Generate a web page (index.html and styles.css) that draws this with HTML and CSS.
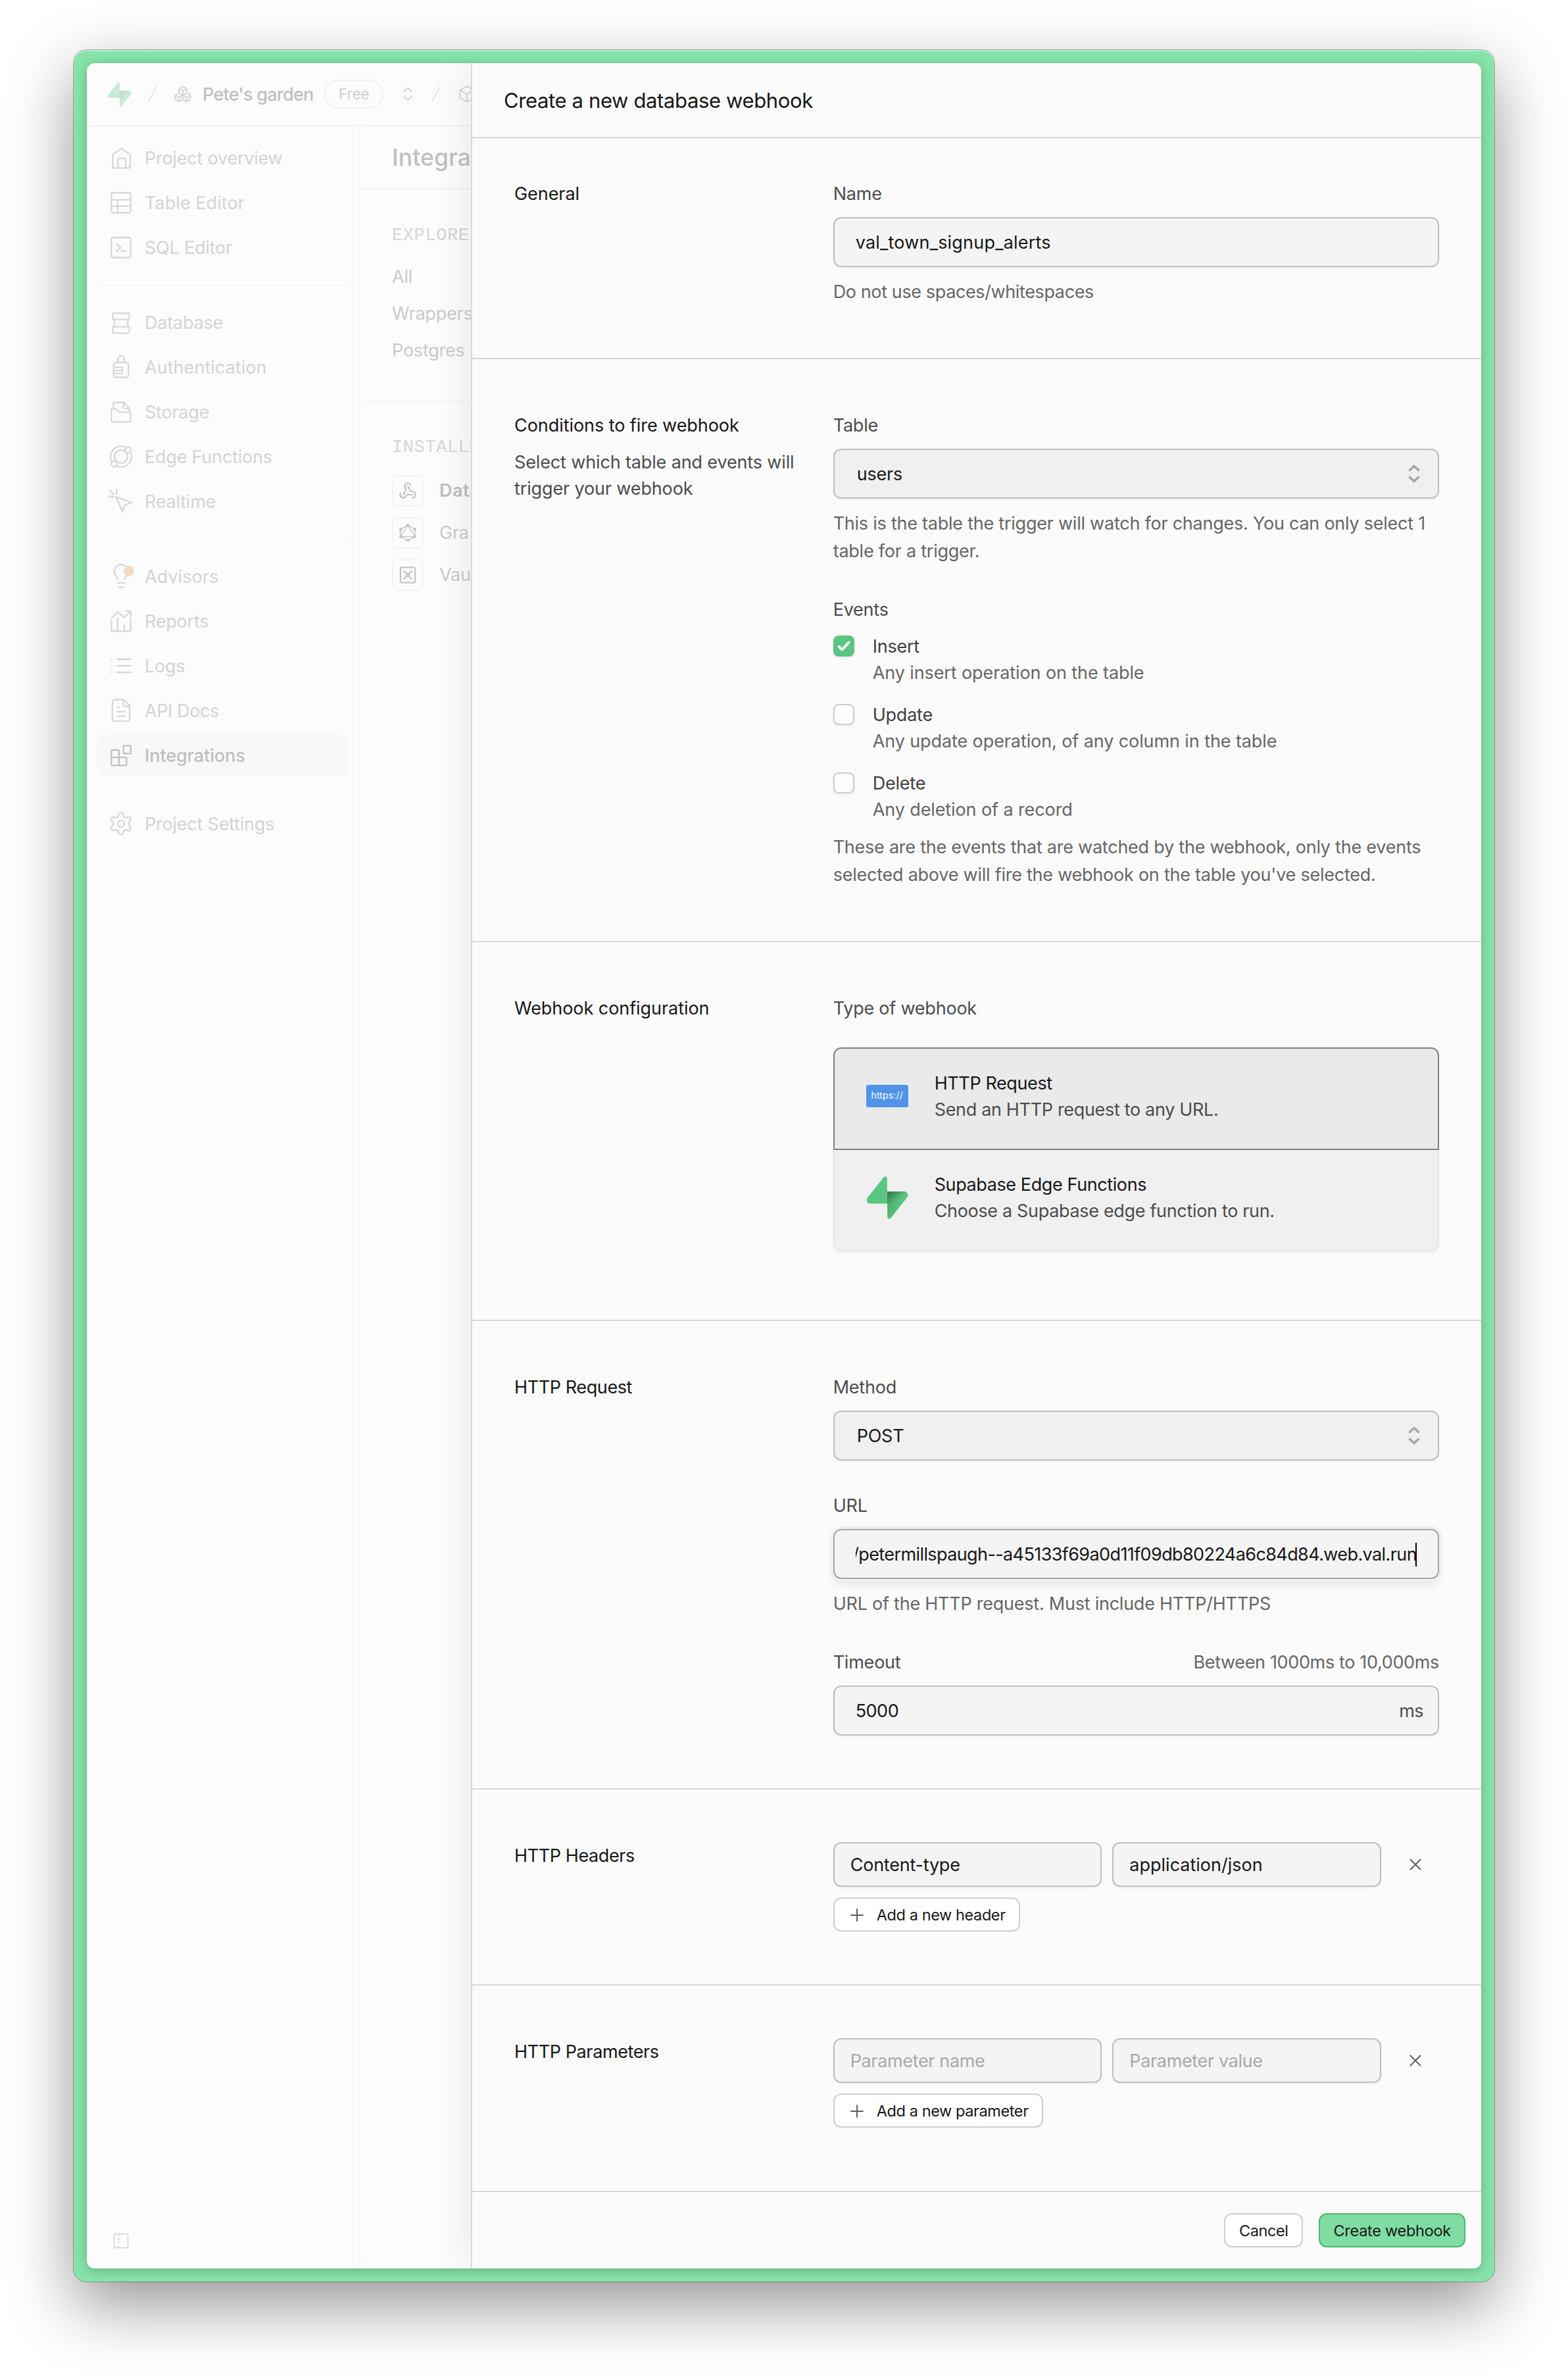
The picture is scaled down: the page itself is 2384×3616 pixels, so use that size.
FILE: index.html
```html
<!DOCTYPE html>
<html lang="en">
<head>
<meta charset="utf-8">
<title>Create a new database webhook</title>
<link rel="stylesheet" href="styles.css">
</head>
<body>
<svg class="defs" width="0" height="0" aria-hidden="true">
  <defs>
    <linearGradient id="bolt-base" x1="54" y1="55" x2="94" y2="72" gradientUnits="userSpaceOnUse"><stop offset="0" stop-color="#4aa86b"/><stop offset="1" stop-color="#5bc680"/></linearGradient>
    <linearGradient id="bolt-shade" x1="40" y1="32" x2="66" y2="72" gradientUnits="userSpaceOnUse"><stop offset="0" stop-color="#000" stop-opacity=".45"/><stop offset="1" stop-color="#000" stop-opacity="0"/></linearGradient>
    <symbol id="bolt" viewBox="0 0 109 113">
      <path fill="url(#bolt-base)" d="M63.7 110.3c-2.9 3.6-8.7 1.6-8.7-3L54 40h45.2c8.2 0 12.8 9.5 7.7 15.9z"/>
      <path fill="url(#bolt-shade)" d="M63.7 110.3c-2.9 3.6-8.7 1.6-8.7-3L54 40h45.2c8.2 0 12.8 9.5 7.7 15.9z"/>
      <path fill="#5bc680" d="M45.3 2.1c2.9-3.6 8.7-1.7 8.7 2.9l.5 67.3H9.8c-8.2 0-12.7-9.5-7.6-15.9z"/>
    </symbol>
    <symbol id="updown" viewBox="0 0 20 28"><path d="M3.5 8.5 10 2.5l6.5 6M3.5 19.5l6.5 6 6.5-6"/></symbol>
    <symbol id="plus" viewBox="0 0 20 20"><path d="M10 1v18M1 10h18"/></symbol>
    <symbol id="cross" viewBox="0 0 20 20"><path d="m2.5 2.5 15 15M17.5 2.5l-15 15"/></symbol>
  </defs>
</svg>

<div class="window">
  <div class="app">
    <header class="topbar">
      <svg class="brand"><use href="#bolt"/></svg>
      <svg class="slash" viewBox="0 0 14 24"><path d="M13 1 1 23"/></svg>
      <svg class="ico-s org-ico" viewBox="0 0 24 24"><path d="M2.97 12.92A2 2 0 0 0 2 14.63v3.24a2 2 0 0 0 .97 1.71l3 1.8a2 2 0 0 0 2.06 0L12 19v-5.5l-5-3-4.03 2.42ZM7 16.5l-4.74-2.85M7 16.5l5-3M7 16.5v5.17M12 13.5V19l3.97 2.38a2 2 0 0 0 2.06 0l3-1.8a2 2 0 0 0 .97-1.71v-3.24a2 2 0 0 0-.97-1.71L17 10.5l-5 3ZM17 16.5l-5-3M17 16.5l4.74-2.85M17 16.5v5.17M7.97 4.42A2 2 0 0 0 7 6.13v4.37l5 3 5-3V6.13a2 2 0 0 0-.97-1.71l-3-1.8a2 2 0 0 0-2.06 0l-3 1.8ZM12 8 7.26 5.15M12 8l4.74-2.85M12 13.5V8"/></svg>
      <span class="org">Pete's garden</span>
      <span class="pill">Free</span>
      <svg class="ico-s org-switch" viewBox="0 0 24 24"><path d="m7 15 5 5 5-5M7 9l5-5 5 5"/></svg>
      <svg class="slash second" viewBox="0 0 14 24"><path d="M13 1 1 23"/></svg>
      <svg class="ico-s project-ico" viewBox="0 0 24 24"><path d="M21 8a2 2 0 0 0-1-1.73l-7-4a2 2 0 0 0-2 0l-7 4A2 2 0 0 0 3 8v8a2 2 0 0 0 1 1.73l7 4a2 2 0 0 0 2 0l7-4A2 2 0 0 0 21 16ZM3.3 7l8.7 5 8.7-5M12 22V12"/></svg>
    </header>
    <div class="body">
      <nav class="sidebar">
        <div class="group">
          <a class="item"><svg viewBox="0 0 24 24"><path d="m12 3.2 7.2 5q.8.6.8 1.5v9.8q0 1.5-1.5 1.5h-13Q4 21 4 19.5V9.7q0-.9.8-1.5zM8.8 21v-7.7q0-1 1-1h5q1 0 1 1V21" transform="translate(.4 .2)"/></svg><span>Project overview</span></a>
          <a class="item"><svg viewBox="0 0 24 24"><rect x="3.2" y="3" width="17.6" height="18.3" rx="1.6"/><path d="M3.2 9.4h17.6M3.2 15.2h17.6M8.9 9.4v11.9"/></svg><span class="wide">Table Editor</span></a>
          <a class="item"><svg viewBox="0 0 24 24"><rect x="3.2" y="3" width="17.6" height="18.3" rx="1.6"/><path d="m7.8 8.5 3.7 3.6-3.7 3.6M12 15.3h4.2"/></svg><span>SQL Editor</span></a>
        </div>
        <hr>
        <div class="group">
          <a class="item"><svg viewBox="0 0 24 24"><rect x="4.4" y="3.6" width="15.2" height="5.8" rx="1.2"/><rect x="4.4" y="16" width="15.2" height="5.8" rx="1.2"/><path d="M5.9 9.4V16M18.2 9.4V16"/></svg><span>Database</span></a>
          <a class="item"><svg viewBox="0 0 24 24"><rect x="5.2" y="7.9" width="13.6" height="13.4" rx="1.8"/><path d="M9.2 7.9V4.6a2.9 2.9 0 0 1 5.8 0v3.3M5.2 12.1h8v5.7h-8M5.2 14.9h8"/></svg><span class="wide">Authentication</span></a>
          <a class="item"><svg viewBox="0 0 24 24"><path d="M5 9.5V4.4q0-1.1 1.1-1.1h8.4l5.1 5.6v3M14.2 3.3v4.3q0 1.3 1.3 1.3h4.1M3.2 10.6q0-1.2 1.2-1.2h3.3l2.3 2.8h9.4q1.4 0 1.4 1.4v6q0 1.6-1.6 1.6H4.8q-1.6 0-1.6-1.6z"/></svg><span>Storage</span></a>
          <a class="item"><svg viewBox="0 0 24 24"><circle cx="12" cy="12" r="5.9"/><circle cx="18.4" cy="5.8" r="2.6"/><circle cx="5.7" cy="18.5" r="2.6"/><path d="M16.2 3.5A9.5 9.5 0 0 0 3.8 16.8M20.6 7.900A9.500 9.500 0 0 1 7.900 20.600"/></svg><span>Edge Functions</span></a>
          <a class="item"><svg viewBox="0 0 24 24"><path d="m7.300 7.700 14.200 5.400-6.100 2.500-2 5.800zM8 1.400v3.800M1.600 1.800l3.700 3.700M1.100 7.800h4.300"/></svg><span>Realtime</span></a>
        </div>
        <hr>
        <div class="group">
          <a class="item advisors"><svg viewBox="0 0 24 24"><path d="M9.100 14.900c-.3-1.500-.9-2.300-1.800-3.500a6.200 6.200 0 1 1 9.600 0c-.9 1.200-1.600 2-1.900 3.500M9.200 17.900h5.600M9.900 22h4.200"/></svg><i class="dot"></i><span class="wide">Advisors</span></a>
          <a class="item"><svg viewBox="0 0 24 24"><path d="m3.400 9 5.400-5.200 6.200 5L20.800 3M16.300 2.900h4.700v4.600M3.200 12v8q0 1.300 1.300 1.300h15q1.300 0 1.300-1.300V9.800M8.800 9.800v11.400M15 14.800v6.400"/></svg><span>Reports</span></a>
          <a class="item"><svg viewBox="0 0 24 24"><path d="M8.600 6h12.200M8.600 12h12.200M8.600 18h12.200M3.400 6h.1M3.400 12h.1M3.400 18h.1"/></svg><span>Logs</span></a>
          <a class="item"><svg viewBox="0 0 24 24"><path d="M14.500 2.100H6.100a2 2 0 0 0-2 2v15.600a2 2 0 0 0 2 2h11.700a2 2 0 0 0 2-2V7.600zM14 2.300v4.300a1.600 1.600 0 0 0 1.600 1.600h4M10.300 9H8.600M15.600 13H8.600M15.600 17H8.600"/></svg><span class="tight">API Docs</span></a>
          <a class="item active"><svg viewBox="0 0 24 24"><rect x="14.200" y="3.200" width="6.700" height="7.200" rx=".9"/><path d="M10.200 21.200V8.200q0-1-1-1H4.200q-1 0-1 1v12q0 1 1 1h11.900q1 0 1-1v-5.300q0-1-1-1H3.200"/></svg><span>Integrations</span></a>
        </div>
        <div class="group settings">
          <a class="item"><svg viewBox="0 0 24 24"><path d="M12.220 2h-.44a2 2 0 0 0-2 2v.18a2 2 0 0 1-1 1.730l-.43.25a2 2 0 0 1-2 0l-.15-.08a2 2 0 0 0-2.730.73l-.22.38a2 2 0 0 0 .73 2.730l.15.1a2 2 0 0 1 1 1.720v.51a2 2 0 0 1-1 1.740l-.15.09a2 2 0 0 0-.73 2.730l.22.38a2 2 0 0 0 2.730.73l.15-.08a2 2 0 0 1 2 0l.43.25a2 2 0 0 1 1 1.730V20a2 2 0 0 0 2 2h.44a2 2 0 0 0 2-2v-.18a2 2 0 0 1 1-1.730l.43-.25a2 2 0 0 1 2 0l.15.08a2 2 0 0 0 2.730-.73l.22-.39a2 2 0 0 0-.73-2.730l-.15-.08a2 2 0 0 1-1-1.740v-.5a2 2 0 0 1 1-1.740l.15-.09a2 2 0 0 0 .73-2.730l-.22-.38a2 2 0 0 0-2.730-.73l-.15.08a2 2 0 0 1-2 0l-.43-.25a2 2 0 0 1-1-1.730V4a2 2 0 0 0-2-2z"/><circle cx="12" cy="12" r="3"/></svg><span>Project Settings</span></a>
        </div>
        <svg class="collapse" viewBox="0 0 24 24"><rect x="3" y="3" width="18" height="18" rx="2"/><path d="M9 3v2M9 9v1.500M9 13.500V15M9 19v2"/></svg>
      </nav>
      <main class="page">
        <h1>Integrations</h1>
        <section class="explore">
          <h2>EXPLORE</h2>
          <ul><li>All</li><li>Wrappers</li><li>Postgres Modules</li></ul>
        </section>
        <section class="installed">
          <h2>INSTALLED</h2>
          <ul>
            <li class="current"><i class="tile"><svg viewBox="0 0 24 24"><path d="M18 16.980h-5.990c-1.100 0-1.950.94-2.480 1.900A4 4 0 0 1 2 17c.01-.7.2-1.400.57-2M6 17l3.130-5.780c.53-.97.1-2.180-.5-3.100a4 4 0 1 1 6.890-4.060M12 6l3.130 5.730C15.660 12.700 16.900 13 18 13a4 4 0 0 1 0 8"/></svg></i>Data</li>
            <li><i class="tile"><svg viewBox="0 0 24 24"><path class="thin" d="M12 2 21.500 7.400v9.400L12 22l-9.500-5.200V7.400zM12 2 2.500 16.800h19z"/><g class="nodes"><circle cx="12" cy="2.300" r="2"/><circle cx="21.200" cy="7.400" r="2"/><circle cx="21.200" cy="16.800" r="2"/><circle cx="12" cy="21.700" r="2"/><circle cx="2.800" cy="16.800" r="2"/><circle cx="2.800" cy="7.400" r="2"/></g></svg></i>Gra</li>
            <li><i class="tile"><svg viewBox="0 0 24 24"><rect x="2.500" y="2" width="19" height="20" rx="2"/><circle cx="12" cy="12" r="1.800"/><path d="m7 7 3.500 3.500M17 7l-3.500 3.500M7 17l3.500-3.500M17 17l-3.500-3.500"/></svg></i>Vau</li>
          </ul>
        </section>
      </main>
    </div>

    <aside class="drawer">
      <header class="drawer-head">Create a new database webhook</header>

      <section class="row first">
        <div class="side"><h3>General</h3></div>
        <div class="fields">
          <div class="field">
            <label>Name</label>
            <div class="input snug">val_town_signup_alerts</div>
            <p class="hint narrow">Do not use spaces/whitespaces</p>
          </div>
        </div>
      </section>

      <section class="row">
        <div class="side"><h3>Conditions to fire webhook</h3><p>Select which table and events will trigger your webhook</p></div>
        <div class="fields">
          <div class="field">
            <label>Table</label>
            <div class="input select"><span>users</span><svg><use href="#updown"/></svg></div>
            <p class="hint">This is the table the trigger will watch for changes. You can only select 1<br>table for a trigger.</p>
          </div>
          <div class="field">
            <label>Events</label>
            <div class="checks">
              <div class="check"><i class="box on"><svg viewBox="0 0 20 16"><path d="m2.500 9 5 4.500L17.500 2.500"/></svg></i><div><b>Insert</b><p>Any insert operation on the table</p></div></div>
              <div class="check"><i class="box"></i><div><b>Update</b><p>Any update operation, of any column in the table</p></div></div>
              <div class="check"><i class="box"></i><div><b>Delete</b><p>Any deletion of a record</p></div></div>
            </div>
            <p class="hint">These are the events that are watched by the webhook, only the events<br>selected above will fire the webhook on the table you've selected.</p>
          </div>
        </div>
      </section>

      <section class="row config">
        <div class="side"><h3>Webhook configuration</h3></div>
        <div class="fields">
          <div class="field">
            <label>Type of webhook</label>
            <div class="options">
              <div class="option chosen"><i class="glyph"><span class="https">https://</span></i><div><b class="caps">HTTP Request</b><p>Send an HTTP request to any URL.</p></div></div>
              <div class="option"><i class="glyph"><svg><use href="#bolt"/></svg></i><div><b class="caps">Supabase Edge Functions</b><p>Choose a Supabase edge function to run.</p></div></div>
            </div>
          </div>
        </div>
      </section>

      <section class="row">
        <div class="side"><h3 class="caps">HTTP Request</h3></div>
        <div class="fields">
          <div class="field">
            <label>Method</label>
            <div class="input select"><span>POST</span><svg><use href="#updown"/></svg></div>
          </div>
          <div class="field">
            <label>URL</label>
            <div class="input focus"><span class="clip"><span>/petermillspaugh--a45133f69a0d11f09db80224a6c84d84.web.val.run</span><i class="caret"></i></span></div>
            <p class="hint">URL of the HTTP request. Must include HTTP/HTTPS</p>
          </div>
          <div class="field">
            <div class="label-row"><label>Timeout</label><span>Between 1000ms to 10,000ms</span></div>
            <div class="input"><span class="digits">5000</span><span class="unit">ms</span></div>
          </div>
        </div>
      </section>

      <section class="row">
        <div class="side"><h3 class="caps">HTTP Headers</h3></div>
        <div class="fields">
          <div class="pair"><div class="input small">Content-type</div><div class="input small snug">application/json</div><span class="remove"><svg><use href="#cross"/></svg></span></div>
          <span class="btn add"><svg><use href="#plus"/></svg>Add a new header</span>
        </div>
      </section>

      <section class="row last">
        <div class="side"><h3 class="caps">HTTP Parameters</h3></div>
        <div class="fields">
          <div class="pair"><div class="input small empty">Parameter name</div><div class="input small empty">Parameter value</div><span class="remove"><svg><use href="#cross"/></svg></span></div>
          <span class="btn add"><svg><use href="#plus"/></svg>Add a new parameter</span>
        </div>
      </section>

      <footer class="drawer-foot"><span class="btn cancel">Cancel</span><span class="btn primary">Create webhook</span></footer>
    </aside>
  </div>
</div>
</body>
</html>
```
FILE: styles.css
```css
* { box-sizing: border-box; margin: 0; padding: 0; }
body {
  background: #fff;
  padding: 76px 112px 148px;
  font: 400 27px/40px Inter, "Liberation Sans", sans-serif;
  letter-spacing: -0.22px;
  color: #171717;
  overflow: hidden;
}
ul { list-style: none; }
i { font-style: normal; }
b { font-weight: 400; }
svg { display: block; flex: none; fill: none; stroke: currentColor; stroke-linecap: round; stroke-linejoin: round; }
.defs { position: absolute; }

.window {
  height: 3392px;
  padding: 20px;
  border-radius: 20px;
  background: #86e4aa;
  box-shadow: inset 0 2px 1px rgba(255, 255, 255, .35), 0 0 0 1px rgba(0, 0, 0, .28), 0 36px 100px rgba(0, 0, 0, .42);
}
.app {
  position: relative;
  display: flex;
  flex-direction: column;
  height: 3352px;
  border-radius: 12px;
  overflow: hidden;
  background: #fcfcfc;
  box-shadow: 0 3px 18px rgba(0, 0, 0, .24);
}

/* dimmed dashboard behind the drawer */
.topbar {
  display: flex;
  align-items: center;
  height: 96px;
  padding-left: 32px;
  border-bottom: 2px solid #f3f3f3;
  color: #d2d2d2;
  white-space: nowrap;
}
.brand { width: 36px; height: 37px; opacity: .3; stroke: none; }
.slash { width: 14px; height: 24px; margin-left: 25px; stroke-width: 1.5; color: #dcdcdc; }
.ico-s { width: 28px; height: 28px; stroke-width: 1.5; }
.org-ico { margin-left: 25px; }
.org { width: 168px; margin-left: 16px; padding-top: 2px; color: #c0c0c0; font-weight: 500; letter-spacing: -0.75px; }
.pill {
  width: 90px;
  margin-left: 17px;
  padding-top: 1px;
  border: 2px solid #f0f0f0;
  border-radius: 22px;
  color: #d0d0d0;
  font-size: 23px;
  line-height: 39px;
  letter-spacing: -0.4px;
  text-align: center;
}
.org-switch { margin-left: 23px; color: #d0d0d0; }
.slash.second { margin-left: 22px; }
.project-ico { margin-left: 26px; }

.body { display: flex; flex: 1; }
.sidebar {
  display: flex;
  flex-direction: column;
  width: 416px;
  padding: 16px 16px 28px;
  border-right: 2px solid #f3f3f3;
  color: #d4d4d4;
}
.sidebar hr { height: 2px; margin: 24px 0; border: 0; background: #f7f7f7; }
.group { display: flex; flex-direction: column; gap: 4px; }
.group.settings { margin-top: 40px; }
.item { position: relative; display: flex; align-items: center; gap: 16px; height: 64px; padding-left: 16px; border-radius: 12px; white-space: nowrap; }
.item span { padding-top: 2px; }
.item svg { width: 40px; height: 40px; stroke-width: 1.4; color: #d8d8d8; }
.item .wide { letter-spacing: 0.05px; }
.item .tight { letter-spacing: -0.4px; }
.item.active { background: #f8f8f8; color: #bfbfbf; font-weight: 500; letter-spacing: -0.1px; }
.item.active svg { color: #c2c2c2; }
.dot { position: absolute; left: 40px; top: 16px; width: 16px; height: 16px; border-radius: 50%; background: #f0dcc5; }
.collapse { width: 28px; height: 28px; margin: auto 0 0 22px; stroke-width: 1.5; color: #d8d8d8; }

.page { flex: none; width: 168px; overflow: hidden; color: #cbcbcb; white-space: nowrap; }
.page h1 { height: 96px; padding-left: 48px; border-bottom: 2px solid #f3f3f3; color: #c0c0c0; font-size: 35.500px; font-weight: 500; line-height: 96px; letter-spacing: .1px; }
.page h2 { font: 400 27px/40px "Liberation Mono", monospace; letter-spacing: .6px; color: #d6d6d6; }
.explore { height: 322px; padding: 50px 0 0 48px; border-bottom: 2px solid #f7f7f7; }
.explore ul { margin-top: 15px; }
.explore li { height: 56px; line-height: 56px; }
.installed { padding: 50px 0 0 48px; }
.installed ul { display: flex; flex-direction: column; gap: 16px; margin-top: 22px; }
.installed li { display: flex; align-items: center; gap: 24px; height: 48px; }
.installed .current { color: #bfbfbf; font-weight: 600; letter-spacing: .5px; }
.tile { display: flex; flex: none; align-items: center; justify-content: center; width: 48px; height: 48px; border: 2px solid #f3f3f3; border-radius: 8px; color: #c4c4c4; }
.tile svg { width: 28px; height: 28px; stroke-width: 2; }
.tile .thin { stroke-width: 1.1; }
.tile .nodes { fill: currentColor; stroke: none; }

/* drawer */
.drawer {
  position: absolute;
  top: 0;
  right: 0;
  bottom: 0;
  width: 1536px;
  display: flex;
  flex-direction: column;
  border-left: 2px solid #d9d9d9;
  background: #fbfbfb;
  box-shadow: 0 0 60px rgba(0, 0, 0, .09);
}
.drawer-head { height: 114px; padding: 1px 0 0 48px; border-bottom: 2px solid #dadada; font-size: 31px; line-height: 112px; letter-spacing: -0.37px; }
.row {
  display: grid;
  grid-template-columns: 436.67px minmax(0, 1fr);
  gap: 48px;
  padding: 80px 64px;
  border-bottom: 2px solid #dadada;
}
.row.first { padding-top: 64px; }
.row.config { padding-bottom: 104px; }
.row.last { flex: 1; }
.side { display: flex; flex-direction: column; gap: 16px; padding-top: 1px; }
.side h3 { font-size: 27px; font-weight: 400; letter-spacing: -0.06px; }
.side p { width: 430px; color: #4c4c4c; letter-spacing: -0.14px; }
.fields { display: flex; flex-direction: column; align-items: stretch; }
.field + .field { margin-top: 48px; }
label { display: block; padding-top: 1px; margin-bottom: -1px; color: #4c4c4c; }
.label-row { display: flex; justify-content: space-between; }
.label-row span { padding-top: 1px; margin-bottom: -1px; color: #666; letter-spacing: -0.35px; }
.input {
  display: flex;
  align-items: center;
  height: 76px;
  margin-top: 16px;
  padding: 2px 32px 0;
  border: 2px solid #bfbfbf;
  border-radius: 12px;
  background: #f4f4f4;
  box-shadow: 0 2px 4px rgba(0, 0, 0, .05);
}
.snug { letter-spacing: 0.2px; }
.select { justify-content: space-between; padding: 0 26px 0 34px; background: #f0f0f0; }
.select span { padding-top: 2px; }
.select svg { width: 20px; height: 28px; stroke-width: 3.6; color: #a6a6a6; }
.focus { border-color: #a6a6a6; box-shadow: 0 0 0 4px #efefef, 0 8px 14px rgba(0, 0, 0, .09); }
.clip { display: flex; justify-content: flex-end; align-items: center; flex: 1; min-width: 0; height: 44px; overflow: hidden; white-space: nowrap; letter-spacing: -0.6px; }
.caret { width: 2px; height: 36px; margin-left: -2px; flex: none; background: #000; }
.digits { letter-spacing: -0.5px; }
.unit { margin: 0 -10px 0 auto; color: #4c4c4c; letter-spacing: -0.6px; }
.hint { padding-top: 1px; margin: 16px 0 -1px; line-height: 42px; color: #666; white-space: nowrap; letter-spacing: -0.24px; }
.narrow { letter-spacing: -0.38px; }
.caps { letter-spacing: -0.4px; }
.side .caps { letter-spacing: -0.4px; }

.checks { display: flex; flex-direction: column; gap: 24px; margin-top: 16px; }
.check { display: flex; gap: 28px; }
.check div { padding-top: 1px; margin-bottom: -1px; }
.check b { display: block; color: #3f3f3f; }
.check p { color: #666; letter-spacing: -0.1px; }
.box { display: flex; align-items: center; justify-content: center; width: 32px; height: 32px; margin-top: 4px; border: 2px solid #cdcdcd; border-radius: 8px; background: #fdfdfd; box-shadow: 0 2px 4px rgba(0, 0, 0, .06); }
.box.on { border-color: #5bc582; background: #5bc582; }
.box svg { width: 20px; height: 16px; stroke-width: 3.8; color: #fff; }

.options { margin-top: 40px; }
.option { display: flex; gap: 40px; height: 156px; padding: 33px 48px 0; border: 2px solid #e6e6e6; background: #f0f0f0; }
.option b { display: block; }
.option p { color: #4c4c4c; letter-spacing: -0.33px; }
.option.chosen { position: relative; border-color: #808080; border-radius: 12px 12px 0 0; background: #eaeaea; }
.option + .option { margin-top: -2px; border-radius: 0 0 12px 12px; box-shadow: 0 2px 4px rgba(0, 0, 0, .05); }
.glyph { display: flex; align-items: center; justify-content: center; width: 64px; height: 64px; margin-top: 7px; }
.glyph svg { width: 64px; height: 65px; stroke: none; }
.https { width: 64px; height: 34px; border-radius: 3px; background: #5094ea; color: #fff; font-size: 14px; line-height: 32px; letter-spacing: .15px; text-align: center; }

.pair { display: grid; grid-template-columns: 1fr 1fr 72px; gap: 16px; align-items: center; }
.input.small { height: 68px; margin: 0; padding: 1px 24px 0; }
.input.small.snug { letter-spacing: 0; }
.input.empty { color: #a8a8a8; letter-spacing: -0.35px; }
.remove { display: flex; justify-content: center; color: #5f5f5f; }
.remove svg { width: 20px; height: 20px; stroke-width: 2; }
.btn {
  display: flex;
  align-items: center;
  height: 52px;
  padding: 1px 21px 0;
  border: 2px solid #cfcfcf;
  border-radius: 12px;
  background: #fff;
  font-size: 23.500px;
  letter-spacing: -0.4px;
  white-space: nowrap;
}
.add { align-self: flex-start; gap: 20px; margin-top: 16px; padding-left: 24px; padding-right: 20px; }
.add svg { width: 20px; height: 20px; stroke-width: 2; color: #5f5f5f; }
.drawer-foot { display: flex; justify-content: flex-end; align-items: center; gap: 24px; height: 116px; padding-right: 24px; }
.cancel { letter-spacing: -0.45px; }
.primary { padding: 1px 20px 0; border-color: #50b475; background: #7fdda3; letter-spacing: -0.27px; }
```
